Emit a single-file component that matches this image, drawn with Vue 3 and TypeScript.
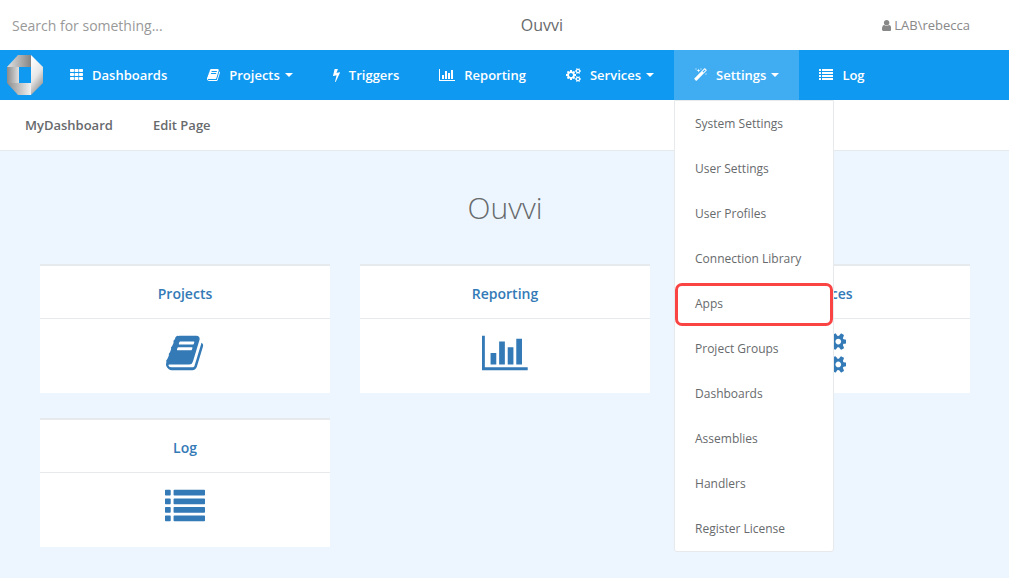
<script setup lang="ts">
import { ref } from 'vue'

type IconName = 'th' | 'book' | 'bolt' | 'chart' | 'cogs' | 'magic' | 'list' | 'user'

interface Icon {
  left: number
  width: number
  path: string
}

interface NavItem {
  label: string
  icon: IconName
  menu?: string[]
}

const rowsOfCells = [128, 640, 1152]
  .map((y) => [0, 576, 1152].map((x) => `M${x + 96} ${y}h320q96 0 96 96v192q0 96-96 96h-320q-96 0-96-96v-192q0-96 96-96z`).join(''))
  .join('')

const rowsOfList = [128, 512, 896, 1280]
  .map((y) => `M32 ${y}h192q32 0 32 32v192q0 32-32 32h-192q-32 0-32-32v-192q0-32 32-32zM416 ${y}h1344q32 0 32 32v192q0 32-32 32h-1344q-32 0-32-32v-192q0-32 32-32z`)
  .join('')

const icons: Record<IconName, Icon> = {
  th: { left: 0, width: 1664, path: rowsOfCells },
  list: { left: 0, width: 1792, path: rowsOfList },
  book: {
    left: 64,
    width: 1664,
    path: 'M1703 478q40 57 18 129l-275 906q-19 64-76.5 107.5t-122.5 43.5h-923q-77 0-148.5-53.5t-99.5-131.5q-24-67-2-127 0-4 3-27t4-37q1-8-3-21.5t-3-19.5q2-11 8-21t16.5-23.5 16.5-23.5q23-38 45-91.5t30-91.5q3-10 .5-30t-.5-28q3-11 17-28t17-23q21-36 42-92t25-90q1-9-2.5-32t.5-28q4-13 22-30.5t22-22.5q19-26 42.5-84.5t27.5-96.5q1-8-3-25.5t-2-26.5q2-8 9-18t18-23 17-21q8-12 16.5-30.5t15-35 16-36 19.5-32 26.5-23.5 36-11.5 47.5 5.5l-1 3q38-9 51-9h761q74 0 114 56t18 130l-274 906q-36 119-71.5 153.5t-128.5 34.5h-869q-27 0-38 15-11 16-1 43 24 70 144 70h923q29 0 56-15.5t35-41.5l300-987q7-22 5-57 38 15 59 43zm-1064 2q-4 13 2 22.5t20 9.5h608q13 0 25.5-9.5t16.5-22.5l21-64q4-13-2-22.5t-20-9.5h-608q-13 0-25.5 9.5t-16.5 22.5zm-83 256q-4 13 2 22.5t20 9.5h608q13 0 25.5-9.5t16.5-22.5l21-64q4-13-2-22.5t-20-9.5h-608q-13 0-25.5 9.5t-16.5 22.5z',
  },
  bolt: {
    left: 448,
    width: 896,
    path: 'M1333 566q18 20 7 44l-540 1157q-13 25-42 25-4 0-14-2-17-5-25.5-19t-4.5-30l197-808-406 101q-4 1-12 1-18 0-31-11-18-15-13-39l201-825q4-14 16-23t28-9h328q19 0 32 12.5t13 29.5q0 8-5 18l-171 463 396-98q8-2 12-2 19 0 34 15z',
  },
  chart: {
    left: 0,
    width: 2048,
    path: 'M640 896v512h-256v-512h256zm384-512v1024h-256v-1024h256zm1024 1152v128h-2048v-1536h128v1408h1920zm-640-896v768h-256v-768h256zm384-384v1152h-256v-1152h256z',
  },
  cogs: {
    left: 0,
    width: 1920,
    path: 'M896 896q0-106-75-181t-181-75-181 75-75 181 75 181 181 75 181-75 75-181zm768 512q0-52-38-90t-90-38-90 38-38 90q0 53 37.5 90.5t90.5 37.5 90.5-37.5 37.5-90.5zm0-1024q0-52-38-90t-90-38-90 38-38 90q0 53 37.5 90.5t90.5 37.5 90.5-37.5 37.5-90.5zm-384 421v185q0 10-7 19.5t-16 10.5l-155 24q-11 35-32 76 34 48 90 115 7 11 7 20 0 12-7 19-23 30-82.5 89.5t-78.5 59.5q-11 0-21-7l-115-90q-37 19-77 31-11 108-23 155-7 24-30 24h-186q-11 0-20-7.5t-10-17.5l-23-153q-34-10-75-31l-118 89q-7 7-20 7-11 0-21-8-144-133-144-160 0-9 7-19 10-14 41-53t47-61q-23-44-35-82l-152-24q-10-1-17-9.5t-7-19.5v-185q0-10 7-19.5t16-10.5l155-24q11-35 32-76-34-48-90-115-7-11-7-20 0-12 7-20 22-30 82-89t79-59q11 0 21 7l115 90q34-18 77-32 11-108 23-154 7-24 30-24h186q11 0 20 7.5t10 17.5l23 153q34 10 75 31l118-89q8-7 20-7 11 0 21 8 144 133 144 160 0 8-7 19-12 16-42 54t-45 60q23 48 34 82l152 23q10 2 17 10.5t7 19.5zm640 533v140q0 16-149 31-12 27-30 52 51 113 51 138 0 4-4 7-122 71-124 71-8 0-46-47t-52-68q-20 2-30 2t-30-2q-14 21-52 68t-46 47q-2 0-124-71-4-3-4-7 0-25 51-138-18-25-30-52-149-15-149-31v-140q0-16 149-31 13-29 30-52-51-113-51-138 0-4 4-7 4-2 35-20t59-34 30-16q8 0 46 46.5t52 67.5q20-2 30-2t30 2q51-71 92-112l6-2q4 0 124 70 4 3 4 7 0 25-51 138 17 23 30 52 149 15 149 31zm0-1024v140q0 16-149 31-12 27-30 52 51 113 51 138 0 4-4 7-122 71-124 71-8 0-46-47t-52-68q-20 2-30 2t-30-2q-14 21-52 68t-46 47q-2 0-124-71-4-3-4-7 0-25 51-138-18-25-30-52-149-15-149-31v-140q0-16 149-31 13-29 30-52-51-113-51-138 0-4 4-7 4-2 35-20t59-34 30-16q8 0 46 46.5t52 67.5q20-2 30-2t30 2q51-71 92-112l6-2q4 0 124 70 4 3 4 7 0 25-51 138 17 23 30 52 149 15 149 31z',
  },
  magic: {
    left: 64,
    width: 1664,
    path: 'M1254 581l293-293-107-107-293 293zm447-293q0 27-18 45l-1286 1286q-18 18-45 18t-45-18l-198-198q-18-18-18-45t18-45l1286-1286q18-18 45-18t45 18l198 198q18 18 18 45zm-1351-190l98 30-98 30-30 98-30-98-98-30 98-30 30-98zm350 162l196 60-196 60-60 196-60-196-196-60 196-60 60-196zm930 478l98 30-98 30-30 98-30-98-98-30 98-30 30-98zm-640-640l98 30-98 30-30 98-30-98-98-30 98-30 30-98z',
  },
  user: {
    left: 256,
    width: 1280,
    path: 'M1536 1399q0 109-62.5 187t-150.5 78h-854q-88 0-150.5-78t-62.5-187q0-85 8.5-160.5t31.5-152 58.5-131 94-89 134.5-34.5q131 128 313 128t313-128q76 0 134.5 34.5t94 89 58.5 131 31.5 152 8.5 160.5zm-256-887q0 159-112.5 271.5t-271.5 112.5-271.5-112.5-112.5-271.5 112.5-271.5 271.5-112.5 271.5 112.5 112.5 271.5z',
  },
}

const viewBox = (name: IconName) => `${icons[name].left} 0 ${icons[name].width} 1792`

const settingsMenu = [
  'System Settings',
  'User Settings',
  'User Profiles',
  'Connection Library',
  'Apps',
  'Project Groups',
  'Dashboards',
  'Assemblies',
  'Handlers',
  'Register License',
]

const nav: NavItem[] = [
  { label: 'Dashboards', icon: 'th' },
  { label: 'Projects', icon: 'book', menu: [] },
  { label: 'Triggers', icon: 'bolt' },
  { label: 'Reporting', icon: 'chart' },
  { label: 'Services', icon: 'cogs', menu: [] },
  { label: 'Settings', icon: 'magic', menu: settingsMenu },
  { label: 'Log', icon: 'list' },
]

const cards: { label: string; icon: IconName }[] = [
  { label: 'Projects', icon: 'book' },
  { label: 'Reporting', icon: 'chart' },
  { label: 'Services', icon: 'cogs' },
  { label: 'Log', icon: 'list' },
]

const search = ref('')
const openMenu = ref('Settings')
const marked = ref('Apps')

function toggle(label: string) {
  openMenu.value = openMenu.value === label ? '' : label
}
</script>

<template>
  <div class="page">
    <header class="topbar">
      <input v-model="search" class="search" type="text" placeholder="Search for something..." aria-label="Search" />
      <span class="brand">Ouvvi</span>
      <a class="account" href="#">
        <svg class="icon" :viewBox="viewBox('user')" aria-hidden="true"><path :d="icons.user.path" /></svg>
        <span>LAB\rebecca</span>
      </a>
    </header>

    <nav class="mainnav" aria-label="Main">
      <a class="logo" href="#" aria-label="Home">
        <svg viewBox="0 0 36 40" aria-hidden="true">
          <defs>
            <linearGradient id="lg-top" x1="0" x2="1" y1="0" y2="0">
              <stop offset="0" stop-color="#e2e2e2" />
              <stop offset="1" stop-color="#858585" />
            </linearGradient>
            <linearGradient id="lg-left" x1="0" x2="1" y1="0" y2="0">
              <stop offset="0" stop-color="#8a8a8a" />
              <stop offset="1" stop-color="#e0e0e0" />
            </linearGradient>
            <linearGradient id="lg-bottom" x1="0" x2="1" y1="0" y2="0">
              <stop offset="0" stop-color="#8c8c8c" />
              <stop offset="1" stop-color="#f2f2f2" />
            </linearGradient>
            <linearGradient id="lg-right" x1="0.3" x2="0.7" y1="0" y2="1">
              <stop offset="0" stop-color="#ffffff" />
              <stop offset="0.5" stop-color="#e6e6e6" />
              <stop offset="1" stop-color="#858585" />
            </linearGradient>
          </defs>
          <path d="M11 0h13v12H0z" fill="url(#lg-top)" />
          <path d="M0 12h12v16H0z" fill="url(#lg-left)" />
          <path d="M0 28h24v12H11z" fill="url(#lg-bottom)" />
          <path d="M24 0l12 12v16L24 40z" fill="url(#lg-right)" />
        </svg>
      </a>
      <ul class="navlist">
        <li v-for="item in nav" :key="item.label" class="navitem" :class="{ open: openMenu === item.label }">
          <button v-if="item.menu" class="navlink" type="button" :aria-expanded="openMenu === item.label" @click="toggle(item.label)">
            <svg class="icon" :viewBox="viewBox(item.icon)" aria-hidden="true"><path :d="icons[item.icon].path" /></svg>
            <span>{{ item.label }}</span>
            <i class="caret"></i>
          </button>
          <a v-else class="navlink" href="#">
            <svg class="icon" :viewBox="viewBox(item.icon)" aria-hidden="true"><path :d="icons[item.icon].path" /></svg>
            <span>{{ item.label }}</span>
          </a>
          <ul v-if="item.menu?.length && openMenu === item.label" class="menu">
            <li v-for="entry in item.menu" :key="entry">
              <a href="#" :class="{ marked: marked === entry }">{{ entry }}</a>
            </li>
          </ul>
        </li>
      </ul>
    </nav>

    <nav class="subnav" aria-label="Page">
      <a href="#">MyDashboard</a>
      <a href="#">Edit Page</a>
    </nav>

    <main class="content">
      <h1>Ouvvi</h1>
      <div class="cards">
        <a v-for="card in cards" :key="card.label" class="card" href="#">
          <h2>{{ card.label }}</h2>
          <span class="cardbody">
            <svg class="icon large" :viewBox="viewBox(card.icon)" aria-hidden="true"><path :d="icons[card.icon].path" /></svg>
          </span>
        </a>
      </div>
    </main>
  </div>
</template>

<style>
body {
  margin: 0;
  background: #edf6fe;
}
</style>

<style scoped>
.page {
  min-height: 100vh;
  background: #edf6fe;
  color: #676a6c;
  font-family: "Open Sans", "Noto Sans", sans-serif;
  font-size: 13px;
  line-height: 20px;
}

a {
  color: inherit;
  text-decoration: none;
}

ul {
  margin: 0;
  padding: 0;
  list-style: none;
}

.icon {
  display: block;
  height: 13px;
  width: auto;
  fill: currentColor;
  flex: none;
}

.topbar {
  display: grid;
  grid-template-columns: 5fr auto 4fr;
  align-items: center;
  height: 50px;
  padding: 0 39px 0 12px;
  background: #fff;
}

.search {
  width: 200px;
  padding: 2px 0 0;
  border: 0;
  outline: 0;
  background: none;
  color: #676a6c;
  font-family: inherit;
  font-size: 14px;
  line-height: 20px;
}

.search::placeholder {
  color: #999;
  opacity: 1;
}

.brand {
  font-size: 16px;
}

.account {
  display: flex;
  align-items: center;
  justify-self: end;
  gap: 3px;
  color: #888;
}

.mainnav {
  display: flex;
  height: 50px;
  background: #1099f0;
}

.logo {
  display: flex;
  align-items: center;
  width: 43px;
  padding-left: 7px;
}

.logo svg {
  width: 36px;
  height: 40px;
}

.navlist {
  display: flex;
}

.navitem {
  position: relative;
}

.navlink {
  display: flex;
  align-items: center;
  height: 50px;
  padding: 0 20px;
  border: 0;
  background: none;
  color: #fff;
  font-family: inherit;
  font-size: 13px;
  font-weight: 600;
  line-height: 20px;
  cursor: pointer;
}

.navlink .icon {
  height: 14px;
  margin-right: 9px;
}

.open .navlink {
  background: #40adf3;
}

.caret {
  margin-left: 5px;
  border: 4px solid transparent;
  border-top-color: #fff;
  border-bottom: 0;
}

.menu {
  position: absolute;
  z-index: 10;
  top: 100%;
  left: 0;
  min-width: 158px;
  border: 1px solid #e7eaec;
  border-radius: 0 0 3px 3px;
  background: #fff;
}

.menu a {
  position: relative;
  display: block;
  padding: 13px 20px 12px;
  font-size: 12px;
  line-height: 20px;
  white-space: nowrap;
}

.marked::after {
  content: "";
  position: absolute;
  inset: 2px 0 0;
  border: 3px solid #fa4343;
  border-radius: 7px;
}

.subnav {
  display: flex;
  gap: 40px;
  padding: 15px 25px;
  border-bottom: 1px solid #e7eaec;
  background: #fff;
  font-weight: 600;
}

.content {
  padding: 37px 39px 30px 40px;
}

h1 {
  margin: 0 0 36px;
  font-size: 30px;
  font-weight: 300;
  line-height: 40px;
  text-align: center;
}

.cards {
  display: grid;
  grid-template-columns: repeat(3, 1fr);
  gap: 25px 30px;
}

.card {
  border-top: 2px solid #e7eaec;
  background: #fff;
  color: #337ab7;
}

.card h2 {
  margin: 0;
  padding: 18px 15px 14px;
  border-bottom: 1px solid #e7eaec;
  font-size: 14px;
  font-weight: 600;
  line-height: 20px;
  text-align: center;
}

.cardbody {
  display: flex;
  justify-content: center;
  padding: 14px 20px 20px;
}

.icon.large {
  height: 40px;
}
</style>
